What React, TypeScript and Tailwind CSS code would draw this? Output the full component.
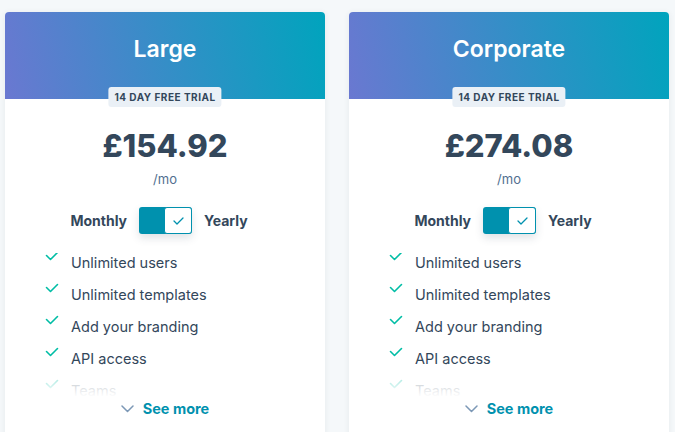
import React from "react";

const features = ["Unlimited users", "Unlimited templates", "Add your branding", "API access", "Teams"];

function Check({ className = "" }: { className?: string }) {
  return (
    <svg width="14" height="10" viewBox="0 0 14 10" className={className} fill="none">
      <path d="M1.5 4.5 L5.5 8.5 L12.5 1.5" stroke="#00bda5" strokeWidth="1.6" strokeLinecap="round" strokeLinejoin="round" />
    </svg>
  );
}

function Card({ title, price }: { title: string; price: string }) {
  return (
    <div className="w-[320px] shrink-0 bg-white rounded-t-[4px] shadow-[0_1px_6px_rgba(45,62,80,0.08)] flex flex-col">
      <div className="relative shrink-0 h-[87px] rounded-t-[4px] bg-linear-[78deg] from-[#6a78d1] to-[#00a4bd] flex justify-center pt-[21px]">
        <span className="text-white text-[23px] font-semibold leading-[32px]">{title}</span>
        <span className="absolute left-1/2 -translate-x-1/2 top-[75px] h-[20px] px-[6px] rounded-[3px] bg-[#eaf0f6] text-[#33475b] text-[10px] font-bold tracking-[0.5px] leading-[20px] whitespace-nowrap">
          14 DAY FREE TRIAL
        </span>
      </div>
      <div className="shrink-0 flex flex-col items-center pt-[27px]">
        <div className="text-[#33475b] text-[31px] font-extrabold leading-[40px]">{price}</div>
        <div className="text-[#516f90] text-[13px] leading-[18px] mt-[4px]">/mo</div>
        <div className="flex items-center mt-[19px] gap-[12px] mr-[12px]">
          <span className="text-[#33475b] text-[14px] font-bold">Monthly</span>
          <div className="flex h-[27px] w-[53px] rounded-[3px] bg-[#0091ae] shadow-[0_4px_8px_rgba(45,62,80,0.15)]">
            <div className="w-[25px]" />
            <div className="flex-1 bg-white border border-[#0091ae] rounded-[3px] flex items-center justify-center">
              <svg width="11" height="8" viewBox="0 0 11 8" fill="none">
                <path d="M1 4 L4 7 L10 1" stroke="#0091ae" strokeWidth="1.3" strokeLinecap="round" strokeLinejoin="round" />
              </svg>
            </div>
          </div>
          <span className="text-[#33475b] text-[14px] font-bold">Yearly</span>
        </div>
      </div>
      <div className="relative shrink-0 h-[144px] overflow-hidden mt-[19px] pl-[40px]">
        <ul className="flex flex-col">
          {features.map((f) => (
            <li key={f} className="flex items-start h-[32px]">
              <Check className="mt-[-2px] w-[14px]" />
              <span className="ml-[12px] text-[#33475b] text-[14.5px] leading-[20px]">{f}</span>
            </li>
          ))}
        </ul>
        <div className="absolute left-0 right-0 bottom-0 h-[24px] bg-linear-to-b from-white/60 to-white" />
      </div>
      <div className="shrink-0 flex items-center justify-center mt-[2px] gap-[9px]">
        <svg width="13" height="8" viewBox="0 0 13 8" fill="none">
          <path d="M1 1 L6.5 6.5 L12 1" stroke="#7c98b6" strokeWidth="1.5" strokeLinecap="round" strokeLinejoin="round" />
        </svg>
        <span className="text-[#0091ae] text-[14.5px] font-bold leading-[20px]">See more</span>
      </div>
      <div className="h-[40px] shrink-0" />
    </div>
  );
}

export default function App() {
  return (
    <div
      className="w-[675px] h-[432px] overflow-hidden bg-[#f5f8fa] pt-[12px] pl-[5px] flex items-start gap-[24px]"
      style={{ fontFamily: "Inter, 'Noto Sans', sans-serif" }}
    >
      <Card title="Large" price="£154.92" />
      <Card title="Corporate" price="£274.08" />
    </div>
  );
}
